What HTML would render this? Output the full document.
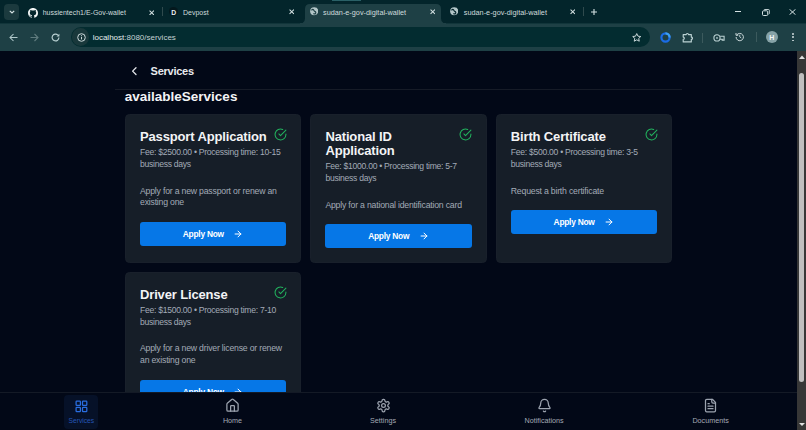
<!DOCTYPE html>
<html><head><meta charset="utf-8">
<style>
*{margin:0;padding:0;box-sizing:border-box}
html,body{width:806px;height:430px;overflow:hidden;background:#020817;font-family:"Liberation Sans",sans-serif}
.abs{position:absolute}
#tabstrip{position:absolute;left:0;top:0;width:806px;height:23px;background:#03252b}
#toolbar{position:absolute;left:0;top:23px;width:806px;height:28px;background:#1e4045}
.ttext{position:absolute;font-size:7.3px;color:#cfdcdd;white-space:nowrap;line-height:10px}
#page{position:absolute;left:0;top:51px;width:797px;height:379px;background:#020817;overflow:hidden}
.card{position:absolute;background:#161e28;border:1px solid #19202b;border-radius:4.5px;width:176.2px}
.title{position:absolute;left:14px;margin-top:-1px;font-weight:bold;color:#f3f4f6;font-size:13px;letter-spacing:-0.15px;line-height:14px;white-space:nowrap}
.fee{position:absolute;left:14px;margin-top:-1px;color:#a3abb7;font-size:8.6px;letter-spacing:-0.28px;line-height:11.7px;width:155px;white-space:nowrap}
.desc{position:absolute;left:14px;margin-top:-1px;color:#a3abb7;font-size:8.7px;letter-spacing:-0.2px;line-height:11.7px;width:155px;white-space:nowrap}
.btn{position:absolute;left:14px;margin-top:-1px;width:146.2px;height:24px;background:#0677e7;border-radius:3px;color:#fff;font-weight:bold;font-size:8px}
.btn span{position:absolute;top:6.9px;left:42.8px;white-space:nowrap;line-height:10px;font-size:8.4px;letter-spacing:-0.25px}
.btn svg{position:absolute;left:93.3px;top:7.1px}
.chk{position:absolute;left:147.8px;top:13.35px}
#nav{position:absolute;left:0;top:392px;width:797px;height:38px;background:#020817;border-top:1px solid #141a26}
.nl{position:absolute;font-size:7.2px;color:#b5bcc7;white-space:nowrap;line-height:9px}
#sb{position:absolute;left:797px;top:51px;width:9px;height:379px;background:#373737}
</style></head><body>
<div id="tabstrip">
 <div class="abs" style="left:331.6px;top:0;width:29px;height:1px;background:#2a6066"></div>
 <div class="abs" style="left:4px;top:4px;width:15px;height:16px;border-radius:4px;background:#1b3a3e"></div>
 <svg class="abs" style="left:9px;top:10px" width="6" height="4" viewBox="0 0 6 4"><path d="M0.8 0.8 L3 3 L5.2 0.8" stroke="#d5e2e3" stroke-width="1.2" fill="none"/></svg>
 <svg class="abs" style="left:28px;top:8px" width="10" height="10" viewBox="0 0 16 16"><path fill="#f2f5f5" d="M8 0C3.58 0 0 3.58 0 8c0 3.54 2.29 6.53 5.47 7.59.4.07.55-.17.55-.38 0-.19-.01-.82-.01-1.49-2.01.37-2.53-.49-2.69-.94-.09-.23-.48-.94-.82-1.13-.28-.15-.68-.52-.01-.53.63-.01 1.080.58 1.23.82.72 1.210 1.87.87 2.33.66.07-.52.28-.87.51-1.07-1.78-.2-3.64-.89-3.64-3.950 0-.87.31-1.59.82-2.15-.08-.2-.36-1.020.08-2.120 0 0 .67-.21 2.2.82.64-.18 1.32-.27 2-.27.68 0 1.36.09 2 .27 1.53-1.04 2.2-.82 2.2-.82.44 1.100.16 1.920.08 2.120.51.56.82 1.270.82 2.150 0 3.07-1.87 3.750-3.65 3.950.29.25.54.73.54 1.480 0 1.070-.01 1.930-.01 2.200 0 .21.15.46.55.38A8.013 8.013 0 0016 8c0-4.42-3.58-8-8-8z"/></svg>
 <div class="ttext" style="left:42.7px;top:7.5px;font-size:7px">hussientech1/E-Gov-wallet</div>
 <svg class="abs" style="left:148.5px;top:9.5px" width="5.5" height="5.5" viewBox="0 0 6 6"><path d="M0.6 0.6L5.4 5.4M5.4 0.6L0.6 5.4" stroke="#d5e2e3" stroke-width="1.1"/></svg>
 <div class="abs" style="left:162px;top:7px;width:1px;height:9px;background:#2f4a4d"></div>
 <div class="abs" style="left:168.7px;top:7.3px;width:9.3px;height:8.6px;border-radius:50%;background:#04181d"></div>
 <div class="abs" style="left:171.3px;top:8.5px;font-size:6.8px;line-height:7px;font-weight:bold;color:#e8f0f4">D</div>
 <div class="ttext" style="left:183px;top:7.5px;font-size:7px">Devpost</div>
 <svg class="abs" style="left:288.8px;top:9px" width="5.5" height="5.5" viewBox="0 0 6 6"><path d="M0.6 0.6L5.4 5.4M5.4 0.6L0.6 5.4" stroke="#d5e2e3" stroke-width="1.1"/></svg>
 <svg class="abs" style="left:300px;top:3.5px" width="146" height="19.5" viewBox="0 0 146 19.5"><path d="M0 19.5 Q5 19.5 5 14.5 L5 5 Q5 0 10 0 L136 0 Q141 0 141 5 L141 14.5 Q141 19.5 146 19.5 Z" fill="#1e4045"/></svg>
 <svg class="abs" style="left:309.6px;top:7.4px" width="8.4" height="8.4" viewBox="0 0 24 24"><circle cx="12" cy="12" r="11.5" fill="#b3c6c8"/><path d="M5 8.5Q8 5.5 10.5 8.5L12 11Q14 13 16 14Q17.5 17 15.5 19Q13 20.5 10.5 19.5" stroke="#1e4045" stroke-width="3.4" fill="none" stroke-linecap="round"/></svg>
 <div class="ttext" style="left:323px;top:7.5px">sudan-e-gov-digital-wallet</div>
 <svg class="abs" style="left:429.5px;top:9.2px" width="5.5" height="5.5" viewBox="0 0 6 6"><path d="M0.6 0.6L5.4 5.4M5.4 0.6L0.6 5.4" stroke="#d5e2e3" stroke-width="1.1"/></svg>
 <svg class="abs" style="left:449.8px;top:7.4px" width="8.4" height="8.4" viewBox="0 0 24 24"><circle cx="12" cy="12" r="11.5" fill="#b3c6c8"/><path d="M5 8.5Q8 5.5 10.5 8.5L12 11Q14 13 16 14Q17.5 17 15.5 19Q13 20.5 10.5 19.5" stroke="#03252b" stroke-width="3.4" fill="none" stroke-linecap="round"/></svg>
 <div class="ttext" style="left:463.8px;top:7.5px">sudan-e-gov-digital-wallet</div>
 <svg class="abs" style="left:569.7px;top:9.2px" width="5.5" height="5.5" viewBox="0 0 6 6"><path d="M0.6 0.6L5.4 5.4M5.4 0.6L0.6 5.4" stroke="#d5e2e3" stroke-width="1.1"/></svg>
 <div class="abs" style="left:583px;top:7px;width:1px;height:9px;background:#2f4a4d"></div>
 <svg class="abs" style="left:590.5px;top:9px" width="6" height="6" viewBox="0 0 6 6"><path d="M3 0V6M0 3H6" stroke="#d5e2e3" stroke-width="1.1"/></svg>
 <div class="abs" style="left:735px;top:11px;width:6.3px;height:1px;background:#d5e2e3"></div>
 <svg class="abs" style="left:761.5px;top:9px" width="8" height="7" viewBox="0 0 8 7"><rect x="0.5" y="1.8" width="5.2" height="4.7" rx="1" stroke="#d5e2e3" stroke-width="1" fill="none"/><path d="M2 1.2 Q2 0.5 2.8 0.5 L6.5 0.5 Q7.3 0.5 7.3 1.3 L7.3 4.5 Q7.3 5.2 6.6 5.2" stroke="#d5e2e3" stroke-width="0.9" fill="none"/></svg>
 <svg class="abs" style="left:788.8px;top:9px" width="7" height="6" viewBox="0 0 7 6"><path d="M0.5 0.3L6.5 5.7M6.5 0.3L0.5 5.7" stroke="#d5e2e3" stroke-width="1"/></svg>
</div>
<div id="toolbar">
 <div class="abs" style="left:0;top:0;width:300px;height:1px;background:#11353a"></div><div class="abs" style="left:446px;top:0;width:360px;height:1px;background:#11353a"></div>
 <svg class="abs" style="left:9px;top:9.5px" width="9" height="9" viewBox="0 0 9 9"><path d="M8.5 4.5H1M4.5 1L1 4.5L4.5 8" stroke="#b2cacc" stroke-width="1.05" fill="none"/></svg>
 <svg class="abs" style="left:30px;top:9.5px" width="9" height="9" viewBox="0 0 9 9"><path d="M0.5 4.5H8M4.5 1L8 4.5L4.5 8" stroke="#5f7b7e" stroke-width="1.1" fill="none"/></svg>
 <svg class="abs" style="left:50.8px;top:9.7px" width="9" height="9" viewBox="0 0 9 9"><path d="M7.9 4.5A3.4 3.4 0 1 1 6.9 2.1" stroke="#b9d0d2" stroke-width="1.15" fill="none"/><path d="M8.4 0.7V3.6H5.5Z" fill="#b9d0d2"/></svg>
 <div class="abs" style="left:71px;top:4px;width:579px;height:20px;border-radius:10px;background:#032c30"></div>
 <div class="abs" style="left:72px;top:5px;width:17px;height:18px;border-radius:9px;background:#19383b"></div>
 <svg class="abs" style="left:76.5px;top:10px" width="9" height="9" viewBox="0 0 9 9"><circle cx="4.5" cy="4.5" r="3.8" stroke="#cbd8da" stroke-width="1" fill="none"/><path d="M4.5 3.8V6.4" stroke="#cbd8da" stroke-width="1"/><circle cx="4.5" cy="2.6" r="0.5" fill="#cbd8da"/></svg>
 <div class="abs" style="left:92.7px;top:10px;font-size:8px;line-height:10px;white-space:nowrap;color:#e3ecec">localhost<span style="color:#c3d2d3">:8080/services</span></div>
 <svg class="abs" style="left:631.5px;top:9.8px" width="9.5" height="9" viewBox="0 0 24 23"><path d="M12 1.5l3.1 6.6 7.2.9-5.3 4.9 1.4 7.1L12 17.5l-6.4 3.5 1.4-7.1L1.7 9l7.2-.9z" stroke="#d5e2e3" stroke-width="2.4" fill="none" stroke-linejoin="round"/></svg>
 <svg class="abs" style="left:659.8px;top:8.6px" width="11" height="11" viewBox="0 0 22 22"><circle cx="11" cy="11" r="8.2" stroke="#1b6ce6" stroke-width="4.4" fill="none"/><path d="M11 2.8A8.2 8.2 0 0 1 19.2 11" stroke="#3fa0f0" stroke-width="4.4" fill="none"/></svg>
 <svg class="abs" style="left:681.5px;top:8.5px" width="11.5" height="11" viewBox="0 0 11.5 11"><path d="M1.2 2.6H4.2A1.15 1.15 0 0 1 6.5 2.6H9.3V5.1A1.15 1.15 0 0 1 9.3 7.4V9.9H1.2V7.4A1.15 1.15 0 0 0 1.2 5.1Z" stroke="#bcd2d4" stroke-width="1.15" fill="none" stroke-linejoin="round"/></svg>
 <div class="abs" style="left:702px;top:9.5px;width:1px;height:10px;background:#3c5a5d"></div>
 <svg class="abs" style="left:712.8px;top:10.6px" width="12" height="8" viewBox="0 0 12 8"><circle cx="4" cy="3.9" r="3.1" stroke="#bcd2d4" stroke-width="1.1" fill="none"/><circle cx="4" cy="3.9" r="0.85" fill="#bcd2d4"/><path d="M7.1 2.3H11.1V6.1H9.2V5.3H7.1" stroke="#bcd2d4" stroke-width="1.1" fill="none"/></svg>
 <svg class="abs" style="left:735.2px;top:9.2px" width="9.5" height="9.5" viewBox="0 0 19 19"><path d="M3.5 6A7.3 7.3 0 1 1 2.2 10" stroke="#cbd8da" stroke-width="2" fill="none"/><path d="M2 2V6.5H6.5" stroke="#cbd8da" stroke-width="2" fill="none"/><path d="M9.5 5.5V9.8L12.5 12" stroke="#cbd8da" stroke-width="1.8" fill="none"/></svg>
 <div class="abs" style="left:756px;top:9px;width:1px;height:10px;background:#3c5a5d"></div>
 <div class="abs" style="left:765.8px;top:8.2px;width:12px;height:12px;border-radius:50%;background:#87a3a7"></div>
 <div class="abs" style="left:769.2px;top:10.8px;font-size:7px;line-height:7px;font-weight:bold;color:#f4f7f7">H</div>
 <div class="abs" style="left:792.2px;top:10.2px;width:1.8px;height:1.8px;background:#cbd8da;border-radius:50%"></div>
 <div class="abs" style="left:792.2px;top:13.4px;width:1.8px;height:1.8px;background:#cbd8da;border-radius:50%"></div>
 <div class="abs" style="left:792.2px;top:16.6px;width:1.8px;height:1.8px;background:#cbd8da;border-radius:50%"></div>
</div>
<div id="page"></div>
<svg class="abs" style="left:130px;top:66px" width="9" height="10" viewBox="0 0 9 10"><path d="M6 1.7L2.6 5.1L6 8.5" stroke="#e5e7eb" stroke-width="1.3" fill="none" stroke-linecap="round" stroke-linejoin="round"/></svg>
<div class="abs" style="left:150.6px;top:64px;font-size:11px;line-height:14px;font-weight:bold;color:#e8eaee;letter-spacing:-0.25px;white-space:nowrap">Services</div>
<div class="abs" style="left:115px;top:89px;width:567px;height:1px;background:#161b27"></div>
<div class="abs" style="left:124.8px;top:89px;font-size:13.5px;line-height:15px;font-weight:bold;color:#f3f4f6;white-space:nowrap">availableServices</div>
<div class="card" style="left:125px;top:114px;height:148.5px"><svg class="chk" width="13" height="13" viewBox="0 0 24 24" fill="none" stroke="#22b35e" stroke-width="1.9" stroke-linecap="round" stroke-linejoin="round"><path d="M22 11.08V12a10 10 0 1 1-5.93-9.14"/><polyline points="22 4 12 14.01 9 11.01"/></svg><div class="title" style="top:16px">Passport Application</div><div class="fee" style="top:33.4px">Fee: $2500.00 • Processing time: 10-15<br>business days</div><div class="desc" style="top:71.6px">Apply for a new passport or renew an<br>existing one</div><div class="btn" style="top:108.0px"><span>Apply Now</span><svg width="10" height="10" viewBox="0 0 24 24" fill="none" stroke="#fff" stroke-width="2.4" stroke-linecap="round" stroke-linejoin="round"><path d="M5 12h14"/><path d="m12 5 7 7-7 7"/></svg></div></div><div class="card" style="left:310.4px;top:114px;height:148.5px"><svg class="chk" width="13" height="13" viewBox="0 0 24 24" fill="none" stroke="#22b35e" stroke-width="1.9" stroke-linecap="round" stroke-linejoin="round"><path d="M22 11.08V12a10 10 0 1 1-5.93-9.14"/><polyline points="22 4 12 14.01 9 11.01"/></svg><div class="title" style="top:16px">National ID<br>Application</div><div class="fee" style="top:47.4px">Fee: $1000.00 • Processing time: 5-7<br>business days</div><div class="desc" style="top:85.6px">Apply for a national identification card</div><div class="btn" style="top:110.3px"><span>Apply Now</span><svg width="10" height="10" viewBox="0 0 24 24" fill="none" stroke="#fff" stroke-width="2.4" stroke-linecap="round" stroke-linejoin="round"><path d="M5 12h14"/><path d="m12 5 7 7-7 7"/></svg></div></div><div class="card" style="left:495.8px;top:114px;height:148.5px"><svg class="chk" width="13" height="13" viewBox="0 0 24 24" fill="none" stroke="#22b35e" stroke-width="1.9" stroke-linecap="round" stroke-linejoin="round"><path d="M22 11.08V12a10 10 0 1 1-5.93-9.14"/><polyline points="22 4 12 14.01 9 11.01"/></svg><div class="title" style="top:16px">Birth Certificate</div><div class="fee" style="top:33.4px">Fee: $500.00 • Processing time: 3-5<br>business days</div><div class="desc" style="top:71.6px">Request a birth certificate</div><div class="btn" style="top:96.3px"><span>Apply Now</span><svg width="10" height="10" viewBox="0 0 24 24" fill="none" stroke="#fff" stroke-width="2.4" stroke-linecap="round" stroke-linejoin="round"><path d="M5 12h14"/><path d="m12 5 7 7-7 7"/></svg></div></div><div class="card" style="left:125px;top:271.8px;height:148.5px"><svg class="chk" width="13" height="13" viewBox="0 0 24 24" fill="none" stroke="#22b35e" stroke-width="1.9" stroke-linecap="round" stroke-linejoin="round"><path d="M22 11.08V12a10 10 0 1 1-5.93-9.14"/><polyline points="22 4 12 14.01 9 11.01"/></svg><div class="title" style="top:16px">Driver License</div><div class="fee" style="top:33.4px">Fee: $1500.00 • Processing time: 7-10<br>business days</div><div class="desc" style="top:71.6px">Apply for a new driver license or renew<br>an existing one</div><div class="btn" style="top:108.0px"><span>Apply Now</span><svg width="10" height="10" viewBox="0 0 24 24" fill="none" stroke="#fff" stroke-width="2.4" stroke-linecap="round" stroke-linejoin="round"><path d="M5 12h14"/><path d="m12 5 7 7-7 7"/></svg></div></div><div id="nav"><div class="abs" style="left:64px;top:2px;width:34px;height:34px;border-radius:4px;background:#061128"></div></div><svg class="abs" style="left:75px;top:399.5px" width="13" height="13" viewBox="0 0 13 13" fill="none" stroke="#2a6ee0" stroke-width="1.25"><rect x="1.1" y="1.1" width="4.3" height="4.3" rx="0.7"/><rect x="7.5" y="1.1" width="4.3" height="4.3" rx="0.7"/><rect x="1.1" y="7.4" width="4.3" height="4.3" rx="0.7"/><rect x="7.5" y="7.4" width="4.3" height="4.3" rx="0.7"/></svg><svg class="abs" style="left:225.0px;top:398px" width="15" height="15" viewBox="0 0 24 24" fill="none" stroke="#9ca3af" stroke-width="2" stroke-linecap="round" stroke-linejoin="round"><path d="M15 21v-8a1 1 0 0 0-1-1h-4a1 1 0 0 0-1 1v8"/><path d="M3 10a2 2 0 0 1 .709-1.528l7-5.999a2 2 0 0 1 2.582 0l7 5.999A2 2 0 0 1 21 10v9a2 2 0 0 1-2 2H5a2 2 0 0 1-2-2z"/></svg><svg class="abs" style="left:375.5px;top:398px" width="15" height="15" viewBox="0 0 24 24" fill="none" stroke="#9ca3af" stroke-width="2" stroke-linecap="round" stroke-linejoin="round"><path d="M12.22 2h-.44a2 2 0 0 0-2 2v.18a2 2 0 0 1-1 1.73l-.43.25a2 2 0 0 1-2 0l-.15-.08a2 2 0 0 0-2.73.73l-.22.38a2 2 0 0 0 .73 2.730l.15.1a2 2 0 0 1 1 1.72v.51a2 2 0 0 1-1 1.74l-.15.09a2 2 0 0 0-.73 2.73l.22.38a2 2 0 0 0 2.73.73l.15-.08a2 2 0 0 1 2 0l.43.25a2 2 0 0 1 1 1.73V20a2 2 0 0 0 2 2h.44a2 2 0 0 0 2-2v-.18a2 2 0 0 1 1-1.73l.43-.25a2 2 0 0 1 2 0l.15.08a2 2 0 0 0 2.73-.73l.22-.39a2 2 0 0 0-.73-2.73l-.15-.08a2 2 0 0 1-1-1.74v-.5a2 2 0 0 1 1-1.74l.15-.09a2 2 0 0 0 .73-2.73l-.22-.38a2 2 0 0 0-2.73-.73l-.15.08a2 2 0 0 1-2 0l-.43-.25a2 2 0 0 1-1-1.73V4a2 2 0 0 0-2-2z"/><circle cx="12" cy="12" r="3"/></svg><svg class="abs" style="left:536.6px;top:398px" width="15" height="15" viewBox="0 0 24 24" fill="none" stroke="#9ca3af" stroke-width="2" stroke-linecap="round" stroke-linejoin="round"><path d="M10.268 21a2 2 0 0 0 3.464 0"/><path d="M3.262 15.326A1 1 0 0 0 4 17h16a1 1 0 0 0 .74-1.673C19.41 13.956 18 12.499 18 8A6 6 0 0 0 6 8c0 4.499-1.411 5.956-2.738 7.326"/></svg><svg class="abs" style="left:703.1px;top:398px" width="15" height="15" viewBox="0 0 24 24" fill="none" stroke="#9ca3af" stroke-width="2" stroke-linecap="round" stroke-linejoin="round"><path d="M15 2H6a2 2 0 0 0-2 2v16a2 2 0 0 0 2 2h12a2 2 0 0 0 2-2V7Z"/><path d="M14 2v4a2 2 0 0 0 2 2h4"/><path d="M10 9H8"/><path d="M16 13H8"/><path d="M16 17H8"/></svg><div class="nl" style="left:31.299999999999997px;width:100px;text-align:center;top:416px;color:#2555b5;font-size:6.7px">Services</div><div class="nl" style="left:182.5px;width:100px;text-align:center;top:416px;color:#a3aab5">Home</div><div class="nl" style="left:333px;width:100px;text-align:center;top:416px;color:#a3aab5">Settings</div><div class="nl" style="left:494.1px;width:100px;text-align:center;top:416px;color:#a3aab5">Notifications</div><div class="nl" style="left:660.6px;width:100px;text-align:center;top:416px;color:#a3aab5">Documents</div><div id="sb"></div>
<svg class="abs" style="left:798.5px;top:54.5px" width="6" height="4" viewBox="0 0 6 4"><path d="M0 4L3 0.5L6 4Z" fill="#e0e0e0"/></svg>
<div class="abs" style="left:798.8px;top:72.5px;width:5.3px;height:309.5px;border-radius:3px;background:#bfbfbf"></div>
<svg class="abs" style="left:798.7px;top:422.5px" width="6" height="3" viewBox="0 0 6 3"><path d="M0 0L3 3L6 0Z" fill="#e0e0e0"/></svg>

</body></html>
